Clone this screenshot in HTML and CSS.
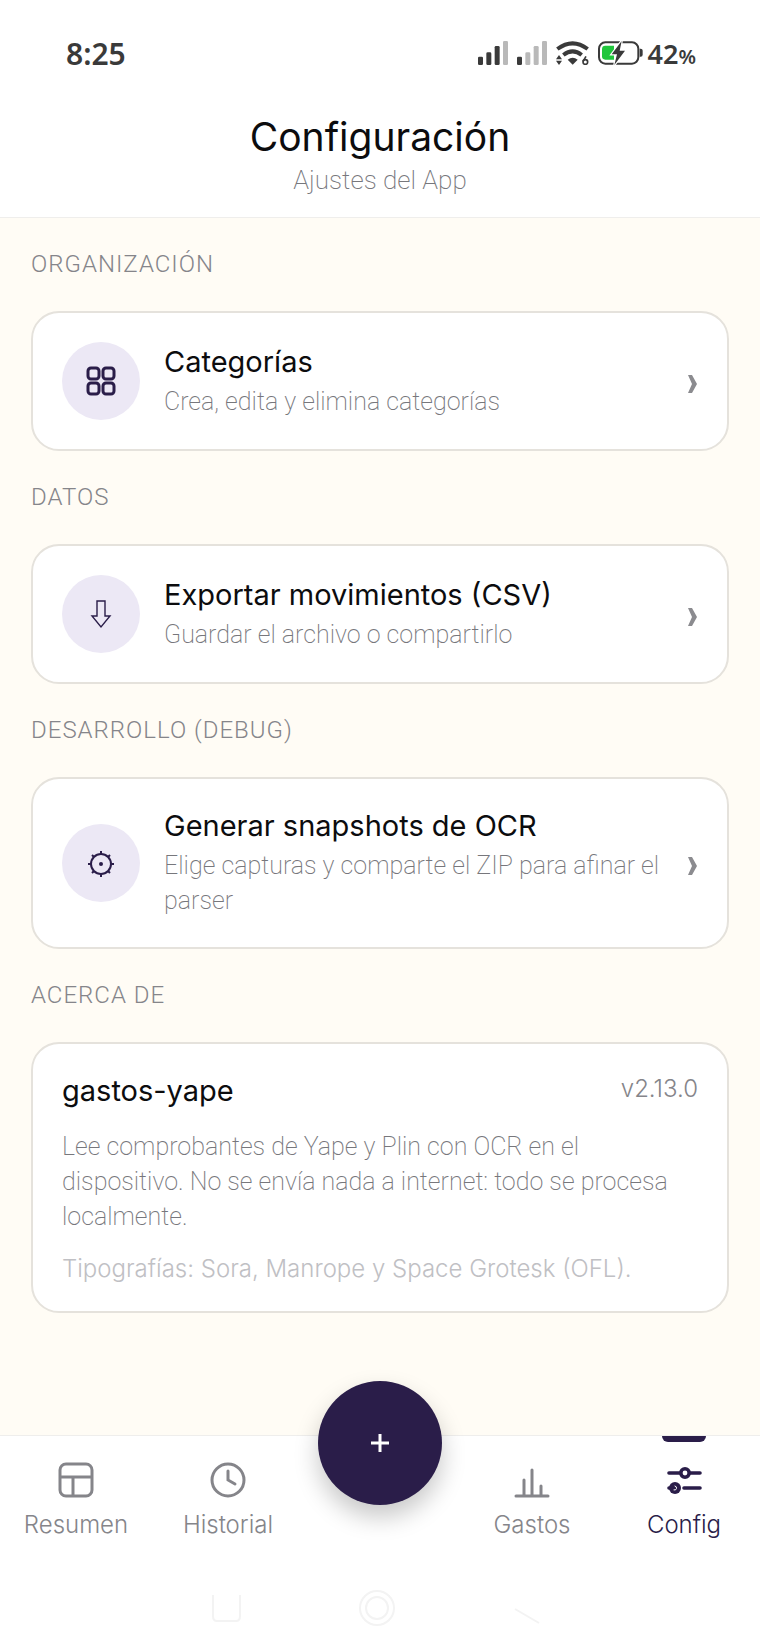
FILE: index.html
```html
<!DOCTYPE html>
<html lang="es">
<head>
    <meta charset="UTF-8">
    <meta name="viewport" content="width=device-width, initial-scale=1.0">
    <title>Configuración</title>
    <link rel="stylesheet" href="styles.css">
</head>
<body>
    <div class="status-bar">
        <span class="time">8:25</span>
        <div class="status-icons">
            <svg class="signal" viewBox="0 0 90 72">
                <g fill="#3a3a3a">
                    <rect x="0" y="47" width="15" height="25" rx="4"/>
                    <rect x="25" y="34" width="15" height="38" rx="4"/>
                    <rect x="50" y="15" width="15" height="57" rx="4"/>
                </g>
                <rect x="75" y="0" width="15" height="72" rx="4" fill="#b9b9b9"/>
            </svg>
            <svg class="signal" viewBox="0 0 90 72">
                <rect x="0" y="47" width="15" height="25" rx="4" fill="#3a3a3a"/>
                <g fill="#b9b9b9">
                    <rect x="25" y="34" width="15" height="38" rx="4"/>
                    <rect x="50" y="15" width="15" height="57" rx="4"/>
                    <rect x="75" y="0" width="15" height="72" rx="4"/>
                </g>
            </svg>
            <svg class="wifi" viewBox="0 0 99 72">
                <g fill="none" stroke="#3a3a3a" stroke-width="12">
                    <path d="M4 24 Q50 -10 95 24"/>
                    <path d="M22 42 Q50 20 77 42"/>
                </g>
                <path d="M35 56 Q50 44 65 56 L50 71 Z" fill="#3a3a3a"/>
                <path d="M0 55 L9 42 L18 55 Z M0 59 L18 59 L9 72 Z" fill="#3a3a3a"/>
                <circle cx="88" cy="63" r="7" fill="none" stroke="#3a3a3a" stroke-width="5"/>
                <path d="M81 61 L90 46" stroke="#3a3a3a" stroke-width="5"/>
            </svg>
            <svg class="battery" viewBox="0 0 135 72">
                <rect x="3" y="4" width="118" height="64" rx="19" fill="none" stroke="#3a3a3a" stroke-width="6"/>
                <path d="M125 23 h3 q6 0 6 6 v12 q0 6 -6 6 h-3 z" fill="#3a3a3a"/>
                <path d="M22 14 H48 V56 H22 Q12 56 12 46 V24 Q12 14 22 14 Z" fill="#20c63c"/>
                <path d="M71 0 L41 40 H57 L49 72 L81 29 H65 Z" fill="#3a3a3a" stroke="#fff" stroke-width="7" paint-order="stroke"/>
            </svg>
            <span class="percent">42<small>%</small></span>
        </div>
    </div>

    <header class="header">
        <h1>Configuración</h1>
        <p>Ajustes del App</p>
    </header>

    <main class="content">
        <h2>ORGANIZACIÓN</h2>
        <a class="card option" href="#categorias">
            <span class="option-icon">
                <svg viewBox="0 0 30 30" fill="none" stroke="#2a1d49" stroke-width="3">
                    <rect x="2" y="2" width="11" height="11" rx="3"/>
                    <rect x="17" y="2" width="11" height="11" rx="3"/>
                    <rect x="2" y="17" width="11" height="11" rx="3"/>
                    <rect x="17" y="17" width="11" height="11" rx="3"/>
                </svg>
            </span>
            <span class="option-text">
                <span class="title">Categorías</span>
                <span class="text">Crea, edita y elimina categorías</span>
            </span>
            <svg class="chevron" viewBox="0 0 9 18"><path d="M0 0 H4 L9 9 L4 18 H0 L4 9 Z" fill="#8b8b8f"/></svg>
        </a>

        <h2>DATOS</h2>
        <a class="card option" href="#exportar">
            <span class="option-icon">
                <svg viewBox="0 0 30 30" fill="none" stroke="#2a1d49" stroke-width="1.4">
                    <path d="M11 2 H19 V17 H24 L15 28 L6 17 H11 Z"/>
                </svg>
            </span>
            <span class="option-text">
                <span class="title">Exportar movimientos (CSV)</span>
                <span class="text">Guardar el archivo o compartirlo</span>
            </span>
            <svg class="chevron" viewBox="0 0 9 18"><path d="M0 0 H4 L9 9 L4 18 H0 L4 9 Z" fill="#8b8b8f"/></svg>
        </a>

        <h2>DESARROLLO (DEBUG)</h2>
        <a class="card option" href="#snapshots">
            <span class="option-icon">
                <svg viewBox="0 0 30 30" fill="none" stroke="#2a1d49" stroke-width="2">
                    <circle cx="15" cy="16" r="10"/>
                    <path d="M15 3 V6 M15 26 V29 M2 16 H5 M25 16 H28 M6 7 L8 9 M24 7 L22 9 M6 25 L8 23 M24 25 L22 23"/>
                    <circle cx="15" cy="16" r="2" fill="#2a1d49" stroke="none"/>
                </svg>
            </span>
            <span class="option-text">
                <span class="title">Generar snapshots de OCR</span>
                <span class="text">Elige capturas y comparte el ZIP para afinar el parser</span>
            </span>
            <svg class="chevron" viewBox="0 0 9 18"><path d="M0 0 H4 L9 9 L4 18 H0 L4 9 Z" fill="#8b8b8f"/></svg>
        </a>

        <h2>ACERCA DE</h2>
        <section class="card about">
            <div class="about-head">
                <span class="title">gastos-yape</span>
                <span class="version">v2.13.0</span>
            </div>
            <p class="text">Lee comprobantes de Yape y Plin con OCR en el dispositivo. No se envía nada a internet: todo se procesa localmente.</p>
            <p class="fonts">Tipografías: Sora, Manrope y Space Grotesk (OFL).</p>
        </section>
    </main>

    <nav class="tabs">
        <a href="#resumen">
            <svg viewBox="0 0 36 36" fill="none" stroke="currentColor" stroke-width="3">
                <rect x="2" y="2" width="32" height="32" rx="6"/>
                <path d="M2 15 H34 M15 15 V34"/>
            </svg>
            <span>Resumen</span>
        </a>
        <a href="#historial">
            <svg viewBox="0 0 36 36" fill="none" stroke="currentColor" stroke-width="3" stroke-linecap="round">
                <circle cx="18" cy="18" r="16"/>
                <path d="M18 9 V18 L25 22"/>
            </svg>
            <span>Historial</span>
        </a>
        <button class="add" aria-label="Agregar">
            <svg viewBox="0 0 18 18" stroke="#fff" stroke-width="3"><path d="M9 0 V18 M0 9 H18"/></svg>
        </button>
        <a href="#gastos">
            <svg viewBox="0 0 36 36" fill="none" stroke="currentColor" stroke-width="3" stroke-linecap="round">
                <path d="M2 34 H34 M10 34 V18 M18 34 V8 M27 34 V24"/>
            </svg>
            <span>Gastos</span>
        </a>
        <a class="active" href="#config">
            <svg viewBox="0 0 36 36" fill="none" stroke="currentColor" stroke-width="3.6" stroke-linecap="round">
                <path d="M3 11 H14 M24 11 H34 M3 26 H6 M18 26 H34"/>
                <circle cx="19" cy="11" r="4.2"/>
                <circle cx="9" cy="26" r="6" fill="currentColor" stroke="none"/>
                <path d="M9 24 a2 2 0 1 1 -1 4" stroke="#fff" stroke-width="1"/>
            </svg>
            <span>Config</span>
        </a>
    </nav>

    <div class="system-nav">
        <svg class="recent" viewBox="0 0 36 36" fill="none"><path d="M5 5 V26 Q5 31 9 31 H28 Q32 31 32 26 V5"/></svg>
        <svg viewBox="0 0 36 36" fill="none"><circle cx="18" cy="18" r="17"/><circle cx="18" cy="18" r="11"/></svg>
        <svg viewBox="0 0 36 36" fill="none"><path d="M5 19 L29 33"/></svg>
    </div>
</body>
</html>
```

FILE: styles.css
```css
*{
    box-sizing: border-box;
}

body{
    margin: 0;
    min-height: 100vh;
    display: flex;
    flex-direction: column;
    background-color: #fffcf5;
    color: #0c0c0e;
    font-family: Inter, "Liberation Sans", sans-serif;
}

h1, h2, p{
    margin: 0;
    font-weight: 400;
}

a{
    color: inherit;
    text-decoration: none;
}

.status-bar{
    height: 103px;
    padding: 3px 64px 0 66px;
    display: flex;
    align-items: center;
    justify-content: space-between;
    background-color: white;
    color: #3a3a3a;
    font-family: "Noto Sans", sans-serif;
    font-weight: 600;
}

.time{
    font-size: 30px;
}

.status-icons{
    display: flex;
    align-items: center;
    gap: 9px;
}

.signal{
    width: 30px;
    height: 24px;
}

.wifi{
    width: 33px;
    height: 24px;
}

.battery{
    width: 45px;
    height: 24px;
}

.percent{
    font-size: 27px;
    margin-left: -4px;
}

.percent small{
    font-size: 20px;
}

.header{
    height: 115px;
    padding-top: 12px;
    background-color: white;
    border-bottom: 1px solid #efeeec;
    text-align: center;
}

.header h1{
    font-size: 39px;
    line-height: 44px;
}

.header p{
    font-family: Roboto, sans-serif;
    font-weight: 200;
    font-size: 26px;
    line-height: 42px;
    color: #77777c;
}

.content{
    flex: 1;
    padding: 0 31px;
}

h2{
    height: 93px;
    font-family: Roboto, sans-serif;
    font-weight: 300;
    font-size: 24px;
    line-height: 93px;
    letter-spacing: 1px;
    color: #85858a;
}

.card{
    padding: 29px;
    background-color: white;
    border: 2px solid #e5e2dc;
    border-radius: 28px;
}

.option{
    display: flex;
    align-items: center;
}

.option-icon{
    width: 78px;
    height: 78px;
    margin-right: 24px;
    border-radius: 50%;
    display: flex;
    align-items: center;
    justify-content: center;
    flex-shrink: 0;
    background-color: #ece8f5;
}

.option-icon svg{
    width: 30px;
    height: 30px;
}

.option-text{
    flex: 1;
}

.title, .option .text{
    display: block;
}

.title{
    font-size: 29px;
    line-height: 36px;
    margin-bottom: 4px;
}

.text{
    font-family: Roboto, sans-serif;
    font-weight: 200;
    font-size: 25px;
    line-height: 35px;
    color: #77777c;
}

.chevron{
    width: 9px;
    height: 18px;
    margin: 6px 1px 0 20px;
}

.about-head{
    display: flex;
    justify-content: space-between;
}

.version{
    font-weight: 300;
    font-size: 24px;
    line-height: 32px;
    color: #85858a;
}

.about .text{
    margin: 16px 0 22px;
}

.fonts{
    font-weight: 300;
    font-size: 24px;
    line-height: 26px;
    color: #c0c0c4;
}

.tabs{
    display: grid;
    grid-template-columns: repeat(5, 1fr);
    height: 129px;
    background-color: white;
    border-top: 1px solid #efeeec;
    font-weight: 300;
    font-size: 24px;
    line-height: 28px;
    color: #85858a;
}

.tabs a{
    position: relative;
    padding-top: 26px;
    display: flex;
    flex-direction: column;
    align-items: center;
    gap: 13px;
}

.tabs a svg{
    width: 36px;
    height: 36px;
}

.tabs .active{
    color: #2a1d49;
}

.tabs .active::before{
    content: "";
    position: absolute;
    top: 0;
    width: 44px;
    height: 6px;
    background-color: #2a1d49;
    border-radius: 0 0 6px 6px;
}

.add{
    width: 124px;
    height: 124px;
    margin-top: -55px;
    justify-self: center;
    display: flex;
    align-items: center;
    justify-content: center;
    border: none;
    border-radius: 50%;
    background-color: #2a1d49;
    box-shadow: 0 12px 24px rgba(0, 0, 0, 0.22);
    cursor: pointer;
}

.add svg{
    width: 18px;
    height: 18px;
}

.system-nav{
    display: grid;
    grid-template-columns: repeat(5, 1fr);
    justify-items: center;
    height: 88px;
    padding: 26px 6px 0 0;
    background-color: white;
}

.system-nav svg{
    width: 36px;
    height: 36px;
    stroke: #f3f3f3;
    stroke-width: 2px;
}

.system-nav .recent{
    grid-column: 2;
}
```
